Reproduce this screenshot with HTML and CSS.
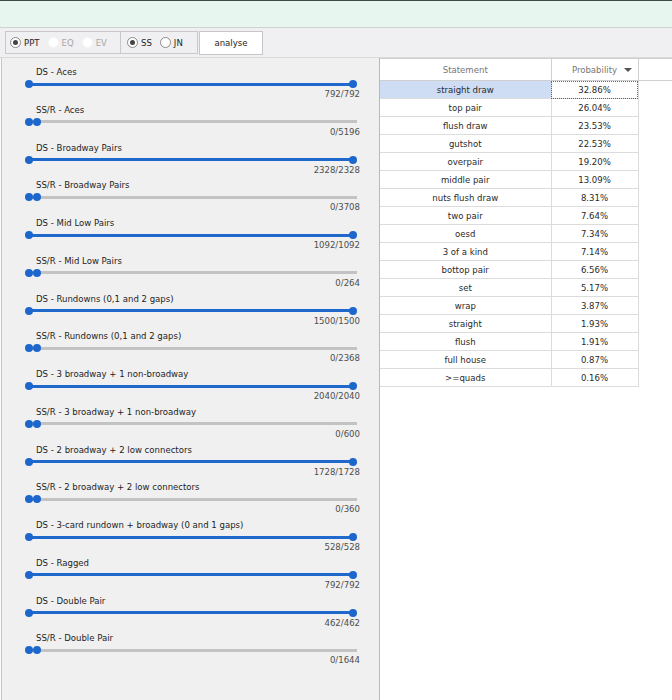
FILE: index.html
```html
<!DOCTYPE html>
<html>
<head>
<meta charset="utf-8">
<link rel="stylesheet" href="styles.css">
</head>
<body>
<div class="window">
  <div class="titlebar"></div>
  <div class="toolbar">
    <div class="group g1">
      <label class="radio checked"><span class="dot"></span>PPT</label>
      <label class="radio disabled"><span class="dot"></span>EQ</label>
      <label class="radio disabled"><span class="dot"></span>EV</label>
    </div>
    <div class="group g2">
      <label class="radio checked"><span class="dot"></span>SS</label>
      <label class="radio"><span class="dot"></span>JN</label>
    </div>
    <button class="btn">analyse</button>
  </div>
  <div class="main">
    <div class="left">
      <div class="slider full"><div class="lbl">DS - Aces</div><div class="track"><i class="t1"></i><i class="t2"></i></div><div class="val">792/792</div></div>
      <div class="slider empty"><div class="lbl">SS/R - Aces</div><div class="track"><i class="t1"></i><i class="t2"></i></div><div class="val">0/5196</div></div>
      <div class="slider full"><div class="lbl">DS - Broadway Pairs</div><div class="track"><i class="t1"></i><i class="t2"></i></div><div class="val">2328/2328</div></div>
      <div class="slider empty"><div class="lbl">SS/R - Broadway Pairs</div><div class="track"><i class="t1"></i><i class="t2"></i></div><div class="val">0/3708</div></div>
      <div class="slider full"><div class="lbl">DS - Mid Low Pairs</div><div class="track"><i class="t1"></i><i class="t2"></i></div><div class="val">1092/1092</div></div>
      <div class="slider empty"><div class="lbl">SS/R - Mid Low Pairs</div><div class="track"><i class="t1"></i><i class="t2"></i></div><div class="val">0/264</div></div>
      <div class="slider full"><div class="lbl">DS - Rundowns (0,1 and 2 gaps)</div><div class="track"><i class="t1"></i><i class="t2"></i></div><div class="val">1500/1500</div></div>
      <div class="slider empty"><div class="lbl">SS/R - Rundowns (0,1 and 2 gaps)</div><div class="track"><i class="t1"></i><i class="t2"></i></div><div class="val">0/2368</div></div>
      <div class="slider full"><div class="lbl">DS - 3 broadway + 1 non-broadway</div><div class="track"><i class="t1"></i><i class="t2"></i></div><div class="val">2040/2040</div></div>
      <div class="slider empty"><div class="lbl">SS/R - 3 broadway + 1 non-broadway</div><div class="track"><i class="t1"></i><i class="t2"></i></div><div class="val">0/600</div></div>
      <div class="slider full"><div class="lbl">DS - 2 broadway + 2 low connectors</div><div class="track"><i class="t1"></i><i class="t2"></i></div><div class="val">1728/1728</div></div>
      <div class="slider empty"><div class="lbl">SS/R - 2 broadway + 2 low connectors</div><div class="track"><i class="t1"></i><i class="t2"></i></div><div class="val">0/360</div></div>
      <div class="slider full"><div class="lbl">DS - 3-card rundown + broadway (0 and 1 gaps)</div><div class="track"><i class="t1"></i><i class="t2"></i></div><div class="val">528/528</div></div>
      <div class="slider full"><div class="lbl">DS - Ragged</div><div class="track"><i class="t1"></i><i class="t2"></i></div><div class="val">792/792</div></div>
      <div class="slider full"><div class="lbl">DS - Double Pair</div><div class="track"><i class="t1"></i><i class="t2"></i></div><div class="val">462/462</div></div>
      <div class="slider empty"><div class="lbl">SS/R - Double Pair</div><div class="track"><i class="t1"></i><i class="t2"></i></div><div class="val">0/1644</div></div>
    </div>
    <div class="right">
      <table class="grid">
        <thead>
          <tr><th class="c1">Statement</th><th class="c2">Probability<span class="arrow"></span></th><th class="c3"></th></tr>
        </thead>
        <tbody>
          <tr class="sel"><td class="c1">straight draw</td><td class="c2 focus">32.86%</td></tr>
          <tr><td class="c1">top pair</td><td class="c2">26.04%</td></tr>
          <tr><td class="c1">flush draw</td><td class="c2">23.53%</td></tr>
          <tr><td class="c1">gutshot</td><td class="c2">22.53%</td></tr>
          <tr><td class="c1">overpair</td><td class="c2">19.20%</td></tr>
          <tr><td class="c1">middle pair</td><td class="c2">13.09%</td></tr>
          <tr><td class="c1">nuts flush draw</td><td class="c2">8.31%</td></tr>
          <tr><td class="c1">two pair</td><td class="c2">7.64%</td></tr>
          <tr><td class="c1">oesd</td><td class="c2">7.34%</td></tr>
          <tr><td class="c1">3 of a kind</td><td class="c2">7.14%</td></tr>
          <tr><td class="c1">bottop pair</td><td class="c2">6.56%</td></tr>
          <tr><td class="c1">set</td><td class="c2">5.17%</td></tr>
          <tr><td class="c1">wrap</td><td class="c2">3.87%</td></tr>
          <tr><td class="c1">straight</td><td class="c2">1.93%</td></tr>
          <tr><td class="c1">flush</td><td class="c2">1.91%</td></tr>
          <tr><td class="c1">full house</td><td class="c2">0.87%</td></tr>
          <tr><td class="c1">&gt;=quads</td><td class="c2">0.16%</td></tr>
        </tbody>
      </table>
    </div>
  </div>
</div>
</body>
</html>
```

FILE: styles.css
```css
* { box-sizing: border-box; }
html, body { margin: 0; padding: 0; }
body {
  width: 672px;
  height: 700px;
  overflow: hidden;
  font-family: "DejaVu Sans Condensed", "DejaVu Sans", sans-serif;
  font-size: 9.5px;
  color: #1e1e1e;
  background: #ffffff;
}
.window { display: flex; flex-direction: column; height: 700px; }
.titlebar {
  height: 28px;
  flex: none;
  background: #e7f7f0;
  border-top: 1px solid #3d4a45;
  border-bottom: 1px solid #cdd3d0;
}
.toolbar {
  height: 30px;
  flex: none;
  display: flex;
  align-items: center;
  padding-left: 5px;
  background: #f0eff1;
  border-bottom: 1px solid #d9d9d9;
}
.group {
  height: 23px;
  display: flex;
  align-items: center;
  border: 1px solid #c9c9c9;
  padding-left: 4px;
}
.g1 { width: 116px; }
.g2 { width: 77px; border-left: none; padding-left: 6px; }
.radio {
  display: flex;
  align-items: center;
  margin-right: 8px;
  color: #262626;
}
.dot {
  width: 11px;
  height: 11px;
  border-radius: 50%;
  border: 1px solid #8a8a8a;
  background: #fff;
  margin-right: 3px;
  display: flex;
  align-items: center;
  justify-content: center;
}
.radio.checked .dot::after {
  content: "";
  width: 5px;
  height: 5px;
  border-radius: 50%;
  background: #444;
}
.radio.disabled { color: #a8a8a8; }
.radio.disabled .dot { border-color: #f6f6f6; }
.btn {
  width: 64px;
  height: 24px;
  margin-left: 1px;
  border: 1px solid #c6c6c6;
  background: #fff;
  font: inherit;
  color: #262626;
  padding: 0;
}
.main { flex: 1; display: flex; min-height: 0; background: #fafafa; }
.left {
  width: 379px;
  margin-left: 1px;
  flex: none;
  background: #f0f0f0;
  border-left: 1px solid #c8c8c8;
  border-right: 1px solid #b8b8b8;
  padding: 7px 0 0 23px;
}
.slider { height: 37.75px; width: 336px; }
.lbl { height: 14px; line-height: 14px; padding-left: 11px; }
.track {
  height: 10px;
  position: relative;
}
.track::before {
  content: "";
  position: absolute;
  left: 4px;
  right: 4px;
  top: 3.5px;
  height: 3px;
  background: #c3c3c3;
}
.full .track::before { background: #1f68cc; right: 8px; }
.track i {
  position: absolute;
  top: 1px;
  width: 8px;
  height: 8px;
  border-radius: 50%;
  background: #1d66cc;
}
.t1 { left: 0; }
.empty .t2 { left: 8px; }
.full .t2 { left: 324px; }
.val {
  height: 11px;
  line-height: 11px;
  margin-top: -1px;
  text-align: right;
  padding-right: 1px;
  color: #4e4e4e;
}
.right { flex: 1; background: #fff; }
.grid {
  border-collapse: collapse;
  table-layout: fixed;
  width: 292px;
}
.grid th {
  height: 22px;
  font-weight: normal;
  color: #777;
  background: #fff;
  border-top: 1px solid #d0d0d0;
  border-bottom: 1px solid #cfcfcf;
  border-right: 1px solid #d0d0d0;
  position: relative;
}
.grid th.c3 { border-right: none; }
.grid .c1 { width: 171px; }
.grid .c2 { width: 87px; }
.grid .c3 { width: 34px; }
.arrow {
  position: absolute;
  right: 6px;
  top: 9px;
  width: 0;
  height: 0;
  border-left: 4px solid transparent;
  border-right: 4px solid transparent;
  border-top: 4px solid #555;
}
.grid td {
  height: 18px;
  padding: 0;
  text-align: center;
  color: #2a2a2a;
  border-bottom: 1px solid #dcdcdc;
  border-right: 1px solid #dcdcdc;
}
.grid tr.sel td.c1 { background: #cfddf4; }
.grid td.focus { outline: 1px dotted #666; outline-offset: -1px; }
```
